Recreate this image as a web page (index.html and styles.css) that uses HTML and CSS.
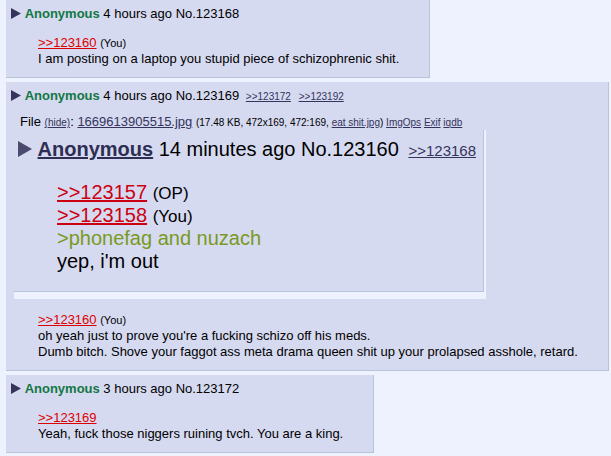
FILE: index.html
```html
<!DOCTYPE html>
<html lang="en">
<head>
    <meta charset="UTF-8">
    <title>Thread</title>
    <link rel="stylesheet" href="styles.css">
</head>
<body>
    <div class="thread">
        <div class="post">
            <div class="post-info">
                <svg class="menu-btn" width="10" height="11" viewBox="0 0 10 11"><path d="M0 0 L10 5.5 L0 11 Z"/></svg>
                <span class="name">Anonymous</span> 4 hours ago No.123168
            </div>
            <blockquote class="post-message">
                <a class="quotelink" href="#p123160">&gt;&gt;123160</a> <span class="you">(You)</span><br>
                I am posting on a laptop you stupid piece of schizophrenic shit.
            </blockquote>
        </div>

        <div class="post">
            <div class="post-info">
                <svg class="menu-btn" width="10" height="11" viewBox="0 0 10 11"><path d="M0 0 L10 5.5 L0 11 Z"/></svg>
                <span class="name">Anonymous</span> 4 hours ago No.123169
                <span class="backlinks"><a href="#p123172">&gt;&gt;123172</a> <a href="#p123192">&gt;&gt;123192</a></span>
            </div>
            <div class="file-info">
                File <span class="small"><a href="#">(hide)</a></span>: <a class="file-name" href="#">1669613905515.jpg</a>
                <span class="small">(17.48 KB, 472x169, 472:169, <a href="#">eat shit.jpg</a>) <a href="#">ImgOps</a> <a href="#">Exif</a> <a href="#">iqdb</a></span>
            </div>
            <div class="file-thumb">
                <div class="shot-post">
                    <div class="shot-info">
                        <svg class="shot-btn" width="14" height="16" viewBox="0 0 14 16"><path d="M0 0 L14 8 L0 16 Z"/></svg>
                        <span class="shot-name">Anonymous</span> 14 minutes ago No.123160
                        <span class="shot-backlink">&gt;&gt;123168</span>
                    </div>
                    <div class="shot-message">
                        <div class="shot-line"><span class="shot-quote">&gt;&gt;123157</span> <span class="shot-tag">(OP)</span></div>
                        <div class="shot-line"><span class="shot-quote">&gt;&gt;123158</span> <span class="shot-tag">(You)</span></div>
                        <div class="shot-line greentext">&gt;phonefag and nuzach</div>
                        <div class="shot-line">yep, i'm out</div>
                    </div>
                </div>
            </div>
            <blockquote class="post-message after-file">
                <a class="quotelink" href="#p123160">&gt;&gt;123160</a> <span class="you">(You)</span><br>
                oh yeah just to prove you're a fucking schizo off his meds.<br>
                Dumb bitch. Shove your faggot ass meta drama queen shit up your prolapsed asshole, retard.
            </blockquote>
        </div>

        <div class="post">
            <div class="post-info">
                <svg class="menu-btn" width="10" height="11" viewBox="0 0 10 11"><path d="M0 0 L10 5.5 L0 11 Z"/></svg>
                <span class="name">Anonymous</span> 3 hours ago No.123172
            </div>
            <blockquote class="post-message">
                <a class="quotelink" href="#p123169">&gt;&gt;123169</a><br>
                Yeah, fuck those niggers ruining tvch. You are a king.
            </blockquote>
        </div>
    </div>
</body>
</html>
```

FILE: styles.css
```css
body {
    margin: 0;
    background-color: #eef2ff;
    font-family: "Liberation Sans", Arial, sans-serif;
    font-size: 13px;
    color: #000;
}
.thread {
    padding-left: 6px;
}
.post {
    display: table;
    background-color: #d6daf0;
    border-right: 1px solid #b7c5d9;
    border-bottom: 1px solid #b7c5d9;
    padding: 6px 30px 10px 5px;
    margin-bottom: 4px;
    white-space: nowrap;
}
.post-info {
    line-height: 16px;
}
.menu-btn {
    fill: #34345c;
    vertical-align: -1px;
}
.name {
    color: #117743;
    font-weight: bold;
}
.backlinks {
    font-size: 10px;
    margin-left: 3px;
}
.backlinks a {
    color: #34345c;
    margin-right: 5px;
}
.post-message {
    margin: 13px 0 0 27px;
    line-height: 16px;
}
.quotelink {
    color: #dd0000;
}
.you {
    font-size: 11px;
}
.file-info {
    margin: 10px 0 0 9px;
    line-height: 14px;
}
.file-info a {
    color: #34345c;
}
.small {
    font-size: 10px;
}
.file-name {
    font-size: 13px;
}
.file-thumb {
    width: 472px;
    height: 169px;
    margin-left: 3px;
    background-color: #eef2ff;
    overflow: hidden;
}
.shot-post {
    width: 469px;
    height: 161px;
    background-color: #d6daf0;
    border-right: 1px solid #b7c5d9;
    border-bottom: 1px solid #b7c5d9;
    font-size: 20px;
}
.shot-info {
    height: 24px;
    padding: 7px 0 0 4px;
    line-height: 24px;
}
.shot-btn {
    fill: #4a4a6e;
    vertical-align: -1px;
}
.shot-name {
    color: #2e2e55;
    font-weight: bold;
    text-decoration: underline;
}
.shot-backlink {
    color: #34345c;
    font-size: 15px;
    text-decoration: underline;
    margin-left: 4px;
}
.shot-message {
    margin: 20px 0 0 43px;
}
.shot-line {
    height: 23px;
    line-height: 23px;
}
.shot-quote {
    color: #cc0011;
    text-decoration: underline;
}
.shot-tag {
    font-size: 17px;
}
.greentext {
    color: #789922;
}
```
